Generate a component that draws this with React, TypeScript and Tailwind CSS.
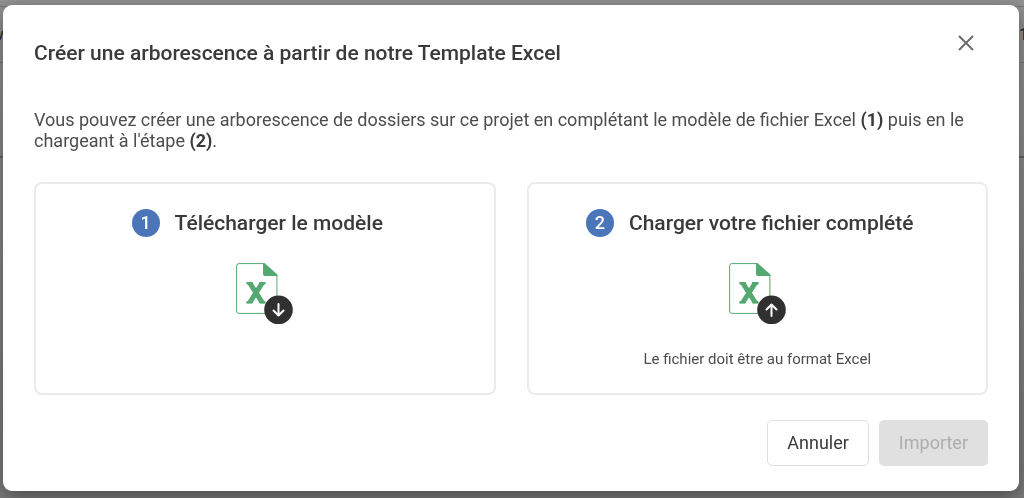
import type { ReactNode } from 'react';

type Direction = 'down' | 'up';

const ARROWS: Record<Direction, string> = {
  down: 'M42.5 41v11.5M37.5 47.5l5 5 5-5',
  up: 'M42.5 53V41.5M37.5 46.5l5-5 5 5',
};

function ExcelIcon({ direction }: { direction: Direction }) {
  return (
    <svg width="57" height="62" viewBox="0 0 57 62" fill="none" aria-hidden="true">
      <path
        d="M27.5 .6H3A2.4 2.4 0 0 0 .6 3V48A2.4 2.4 0 0 0 3 50.4H38.500A2.4 2.4 0 0 0 40.9 48V12"
        stroke="#55a871"
        strokeWidth="1"
      />
      <path d="M27 0h1.5L41.4 11.5V13H29a2 2 0 0 1-2-2z" fill="#55a871" />
      {/* crossed bars, cut flat at the top and bottom */}
      <svg x="10" y="19" width="20" height="21.5" viewBox="0 0 20 21.5">
        <path d="M2.2 -1.5 17.8 23M17.8 -1.5 2.2 23" stroke="#55a871" strokeWidth="5" />
        <path d="M1.5 1.3h4.5M14 1.3h4.5M1.5 20.2h4.5M14 20.2h4.5" stroke="#55a871" strokeWidth="2.4" strokeLinecap="round" />
      </svg>
      <circle cx="42.5" cy="46.8" r="14.3" fill="#303030" />
      <path d={ARROWS[direction]} stroke="#fff" strokeWidth="2" strokeLinecap="round" strokeLinejoin="round" />
    </svg>
  );
}

function StepCard({ step, title, children }: { step: number; title: string; children: ReactNode }) {
  return (
    <section className="flex h-[213px] flex-1 flex-col items-center rounded-lg border-2 border-[#ebebeb] pt-[23px]">
      <h3 className="flex items-center gap-[15px] pr-[15px] text-[21px] leading-8 font-medium">
        <span className="flex size-7 items-center justify-center rounded-full bg-[#4a76b9] text-lg text-white">
          {step}
        </span>
        {title}
      </h3>
      {children}
    </section>
  );
}

/* Dimmed project page that stays behind the dialog */
function ProjectPage() {
  return (
    <div className="min-h-screen overflow-hidden bg-linear-to-b from-[#929292] to-[#7b7b7b] pt-1.5 text-base text-[#222222]">
      <div className="-mx-1 flex h-14 items-center justify-between border-t border-[#777777]">
        <span>v</span>
        <span>1</span>
      </div>
      <div className="h-24 border-t border-b-2 border-t-[#7b7b7b] border-b-[#666666]" />
    </div>
  );
}

export default function App() {
  return (
    <div className="font-[Roboto,sans-serif]">
      <ProjectPage />
      <div className="fixed inset-0 pt-[5px] pr-[5px] pb-2 pl-[3px]">
        <div
          role="dialog"
          aria-labelledby="dialog-title"
          className="rounded-[9px] bg-white px-[31px] pt-6 pb-[25px] text-[#3a3a3a] shadow-[0_6px_20px_rgba(0,0,0,0.4)]"
        >
          <header className="flex items-start justify-between">
            <h2 id="dialog-title" className="pt-2 text-[21px] leading-8 font-medium">
              Créer une arborescence à partir de notre Template Excel
            </h2>
            <button type="button" aria-label="Fermer" className="mr-3 flex h-7 w-5 items-center justify-center">
              <svg width="16" height="16" viewBox="0 0 16 16" fill="none" aria-hidden="true">
                <path d="M1 1l14 14M15 1L1 15" stroke="#6b6b6b" strokeWidth="2" />
              </svg>
            </button>
          </header>

          <p className="mt-10 text-lg leading-[21px] text-[#4d4d4d]">
            Vous pouvez créer une arborescence de dossiers sur ce projet en complétant le modèle de fichier Excel{' '}
            <strong className="text-[#3a3a3a]">(1)</strong> puis en le chargeant à l'étape{' '}
            <strong className="text-[#3a3a3a]">(2)</strong>.
          </p>

          <div className="mt-[31px] flex gap-[31px]">
            <StepCard step={1} title="Télécharger le modèle">
              <button type="button" aria-label="Télécharger le modèle Excel" className="mt-6">
                <ExcelIcon direction="down" />
              </button>
            </StepCard>
            <StepCard step={2} title="Charger votre fichier complété">
              <button type="button" aria-label="Charger le fichier Excel" className="mt-6">
                <ExcelIcon direction="up" />
              </button>
              <p className="mt-6 text-[15px] leading-5 text-[#4d4d4d]">Le fichier doit être au format Excel</p>
            </StepCard>
          </div>

          <footer className="mt-[25px] flex justify-end gap-2.5">
            <button type="button" className="h-[46px] rounded-[5px] border border-[#e0e0e0] px-[19px] text-lg">
              Annuler
            </button>
            <button type="button" disabled className="h-[46px] rounded-[5px] bg-[#e0e0e0] px-5 text-lg text-[#adadad]">
              Importer
            </button>
          </footer>
        </div>
      </div>
    </div>
  );
}
